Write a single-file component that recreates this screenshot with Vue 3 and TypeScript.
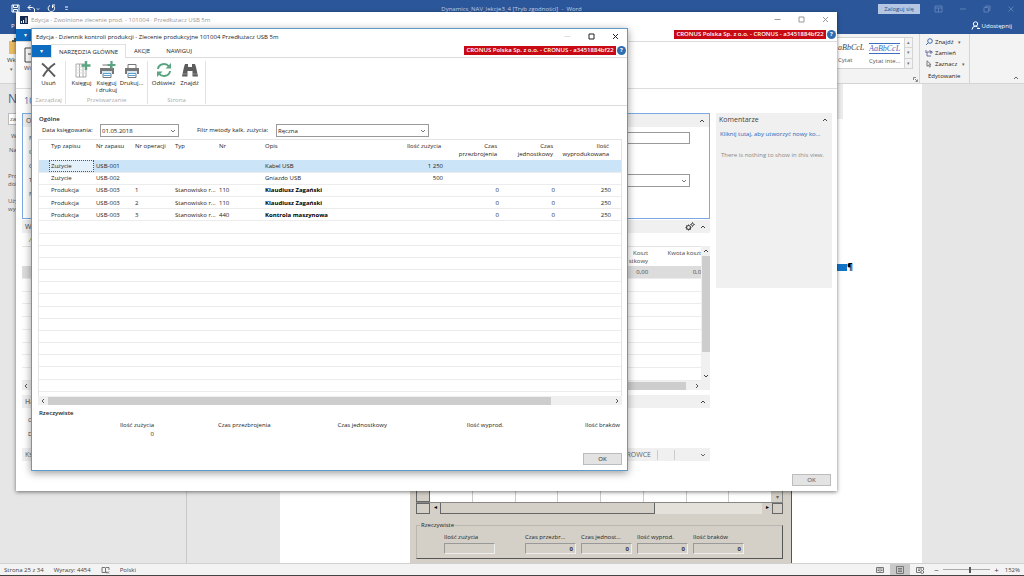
<script setup lang="ts">
import { ref } from 'vue'

interface Row {
  kind: string
  item: string
  op: string
  type: string
  no: string
  desc: string
  strong: boolean
  used: string
  setup: string
  run: string
  made: string
}

const rows: Row[] = [
  { kind: 'Zużycie', item: 'USB-001', op: '', type: '', no: '', desc: 'Kabel USB', strong: false, used: '1 250', setup: '', run: '', made: '' },
  { kind: 'Zużycie', item: 'USB-002', op: '', type: '', no: '', desc: 'Gniazdo USB', strong: false, used: '500', setup: '', run: '', made: '' },
  { kind: 'Produkcja', item: 'USB-003', op: '1', type: 'Stanowisko r...', no: '110', desc: 'Klaudiusz Zagański', strong: true, used: '', setup: '0', run: '0', made: '250' },
  { kind: 'Produkcja', item: 'USB-003', op: '2', type: 'Stanowisko r...', no: '110', desc: 'Klaudiusz Zagański', strong: true, used: '', setup: '0', run: '0', made: '250' },
  { kind: 'Produkcja', item: 'USB-003', op: '3', type: 'Stanowisko r...', no: '440', desc: 'Kontrola maszynowa', strong: true, used: '', setup: '0', run: '0', made: '250' },
]
const blankRows = 14
const selected = ref(0)
const postingDate = ref('01.05.2018')
const method = ref('Ręczna')
const zoom = ref(58)
const company = 'CRONUS Polska Sp. z o.o. - CRONUS - a3451884bf22'
const totals = [
  { label: 'Ilość zużycia', value: '0' },
  { label: 'Czas przezbrojenia', value: '' },
  { label: 'Czas jednostkowy', value: '' },
  { label: 'Ilość wyprod.', value: '' },
  { label: 'Ilość braków', value: '' },
]
const oldTotals = [
  { label: 'Ilość zużycia', value: '' },
  { label: 'Czas przezbr...', value: '0' },
  { label: 'Czas jednost...', value: '0' },
  { label: 'Ilość wyprod.', value: '0' },
  { label: 'Ilość braków', value: '0' },
]
const backLabels = ['N', 'O', 'O', 'T', 'N']
</script>

<template>
  <div class="desktop">
    <header class="word-top">
      <div class="word-title">
        <div class="quick">
          <button aria-label="Zapisz"><svg width="9" height="9" viewBox="0 0 9 9"><path d="M1 1h7v7H1zM2.500 1v2.500h4V1M2.500 8V5.500h4V8" /></svg></button>
          <button aria-label="Cofnij"><svg width="13" height="9" viewBox="0 0 13 9"><path d="M3.500 1 1 3.500 3.500 6M1 3.500h4.500q3 .5 2 4.500" /><path d="m10 4.500 1 1 1-1" /></svg></button>
          <button aria-label="Ponów"><svg width="9" height="9" viewBox="0 0 9 9"><path d="M3 1.500a3.200 3.200 0 1 0 3.500.5M8 1H5.500v3" /></svg></button>
          <button aria-label="Dostosuj"><svg width="7" height="9" viewBox="0 0 7 9"><path d="M2 3h3M2.500 5l1 1 1-1" /></svg></button>
        </div>
        <span class="doc-name">Dynamics_NAV_lekcje3_4 [Tryb zgodności]&nbsp; - &nbsp;Word</span>
        <button class="sign-in">Zaloguj się</button>
        <div class="word-ctl">
          <svg width="9" height="8" viewBox="0 0 9 8"><path d="M1 1h7v6H1zM1 3h7M4.500 3v4" /></svg>
          <svg width="8" height="8" viewBox="0 0 8 8"><path d="M1 4h6" /></svg>
          <svg width="8" height="8" viewBox="0 0 8 8"><path d="M1 2.500h4.500V7H1zM2.500 2.500V1H7v4.500H5.500" /></svg>
          <svg width="8" height="8" viewBox="0 0 8 8"><path d="m1.500 1.500 5 5m0-5-5 5" /></svg>
        </div>
      </div>
      <div class="word-tabs">
        <button>P</button>
        <button class="share"><svg width="9" height="9" viewBox="0 0 9 9"><circle cx="4.500" cy="3" r="2.200" /><path d="M1 8.500Q1.500 5 4.500 5.200q2 0 2.500 1.300M6 7.500h3" /></svg>Udostępnij</button>
      </div>
    </header>

    <section class="word-ribbon">
      <button class="paste">
        <svg width="16" height="17" viewBox="0 0 16 17"><path d="M2 3h12v13H2z" fill="#e9bb62" /><path d="M5 4V2h2V0h3v2h2v2z" fill="#555" /></svg>
        Wk<i>▾</i>
      </button>
      <div class="ribbon-right">
        <div class="gallery">
          <button class="style-a"><em>aBbCcL</em>Cytat</button>
          <button class="style-b"><em>AaBbCcL</em>Cytat inte...</button>
          <div class="gal-nav"><span>▴</span><span>▾</span><span>▾</span></div>
        </div>
        <div class="launcher"><svg width="5" height="5" viewBox="0 0 5 5"><path d="M.5 3V.5H3M2 2l2.500 2.500V2.500M4.500 4.500H2.500" /></svg></div>
        <div class="editing">
          <button><svg width="8" height="8" viewBox="0 0 8 8"><circle cx="5" cy="3" r="2.300" stroke="#3f6db0" /><path d="M3.300 4.700 1 7" stroke="#3f6db0" /></svg>Znajdź<i>▾</i></button>
          <button><svg width="8" height="8" viewBox="0 0 8 8"><path d="M1 1v3h2V2M5 1v3h2V2.500H5M2 5v2h4" stroke="#6a6fa0" /></svg>Zamień</button>
          <button><svg width="8" height="8" viewBox="0 0 8 8"><path d="M2 .8v5.500l1.500-1.200 1 2 1-.5-1-2H6z" stroke="#777" /></svg>Zaznacz<i>▾</i></button>
          <span>Edytowanie</span>
        </div>
        <div class="collapse"><svg width="6" height="4" viewBox="0 0 6 4"><path d="m1 3 2-2 2 2" /></svg></div>
      </div>
    </section>

    <main class="workspace">
      <aside class="nav-pane">
        <h2>N</h2>
        <input type="text" value="za" aria-label="Wyszukaj w dokumencie">
        <p class="n1">W</p>
        <p class="n2">Na</p>
        <p class="n3">Pro<br>dok</p>
        <p class="n4">Uży<br>wy</p>
      </aside>
      <div class="page">
        <div class="doc-pic"></div>
        <div class="doc-mark"><b></b>¶</div>
        <div class="old-app">
          <div class="old-grid"><b></b><i v-for="n in 8" :key="n"></i><span>▾</span></div>
          <div class="old-scroll"><b></b><span>◂</span><i></i><u></u><span>▸</span><b></b></div>
          <fieldset>
            <legend>Rzeczywiste</legend>
            <label v-for="t in oldTotals" :key="t.label">{{ t.label }}<output>{{ t.value }}</output></label>
          </fieldset>
        </div>
      </div>
    </main>

    <footer class="status">
      <span>Strona 25 z 34</span><span>Wyrazy: 4454</span>
      <svg width="9" height="8" viewBox="0 0 9 8"><path d="M4 1.500H1v5h3l.5.5.5-.5h1M4.500 2v5M4.500 1.500H8V4M6 5.500l2 2m0-2-2 2" /></svg>
      <span>Polski</span>
      <div class="views">
        <button aria-label="Tryb odczytu"><svg width="8" height="8" viewBox="0 0 8 8"><path d="M.5 1.500h7v5h-7zM4 1v6M1.500 3h1.500M1.500 4.500h1.500M5 3h1.500M5 4.500h1.500" /></svg></button>
        <button class="on" aria-label="Układ wydruku"><svg width="8" height="8" viewBox="0 0 8 8"><path d="M.5.5h7v7h-7zM2 2.500h4M2 4h4M2 5.500h4" /></svg></button>
        <button aria-label="Układ sieci Web"><svg width="8" height="8" viewBox="0 0 8 8"><path d="M5 6.500H.5v-5h7V4M2 3h4M2 4.500h2" /><circle cx="6.200" cy="6" r="1.500" /></svg></button>
      </div>
      <button class="zb">−</button>
      <input v-model="zoom" type="range" min="0" max="100" aria-label="Powiększenie">
      <button class="zb">+</button>
      <span class="pct">152%</span>
    </footer>

    <section class="win back">
      <div class="titlebar">
        <svg class="logo" width="8" height="8" viewBox="0 0 8 8"><path d="M0 0h8v8H0z" fill="#12284c" /><path d="M1.500 7V5M3.500 7V4M6 7V1.500" stroke="#fff" /></svg>
        <span>Edycja - Zwolnione zlecenie prod. - 101004 · Przedłużacz USB 5m</span>
        <div class="ctl">
          <button aria-label="Minimalizuj"><svg width="7" height="7" viewBox="0 0 7 7"><path d="M.5 3.500h6" /></svg></button>
          <button aria-label="Maksymalizuj"><svg width="7" height="7" viewBox="0 0 7 7"><path d="M1 1h5v5H1z" /></svg></button>
          <button aria-label="Zamknij"><svg width="7" height="7" viewBox="0 0 7 7"><path d="m1 1 5 5m0-5-5 5" /></svg></button>
        </div>
      </div>
      <div class="tabs">
        <button class="file" aria-label="Menu">▾</button>
        <span class="company">{{ company }}</span>
        <button class="help">?</button>
      </div>
      <div class="back-ribbon"><button><svg width="13" height="16" viewBox="0 0 13 16"><path d="M1 1h11v14H1zM4 7h5" /></svg>Wi</button></div>
      <div class="back-body">
        <h1>10</h1>
        <div class="cols">
          <div class="main-col">
            <section class="fast active">
              <header>O<svg width="6" height="4" viewBox="0 0 6 4"><path d="m1 3 2-2 2 2" /></svg></header>
              <div class="fields">
                <div class="labels"><span v-for="(l, i) in backLabels" :key="i">{{ l }}</span></div>
                <div class="inputs">
                  <input type="text" aria-label="Nr">
                  <div class="combo"><select aria-label="Typ"><option></option></select><svg width="6" height="4" viewBox="0 0 6 4"><path d="m1 1 2 2 2-2" /></svg></div>
                </div>
              </div>
            </section>
            <section class="fast lines">
              <header>W
                <svg class="gears" width="10" height="9" viewBox="0 0 10 9"><circle cx="3.500" cy="5.500" r="2" stroke-width="1.200" /><circle cx="7.500" cy="2.500" r="1.200" /><path d="M3.500 2.500v1M3.500 7.500v1M.5 5.500h1M5.500 5.500h1M1.500 3.500l.7.7M5.500 7.500l-.7-.7M1.500 7.500l.7-.7M7.500.3v.8M7.500 3.900v.8M5.300 2.500h.8M8.900 2.500h.8" /></svg>
                <svg width="6" height="4" viewBox="0 0 6 4"><path d="m1 3 2-2 2 2" /></svg></header>
              <div class="line-tools"><svg width="8" height="7" viewBox="0 0 8 7"><path d="M1 6 4 1l1 2" stroke="#a8c26a" /></svg></div>
              <div class="line-grid">
                <table>
                  <thead><tr><th></th><th>Koszt<br>stkowy</th><th>Kwota koszt</th></tr></thead>
                  <tbody>
                    <tr class="grey"><td></td><td>0,00</td><td>0,0</td></tr>
                    <tr v-for="n in 8" :key="n"><td></td><td></td><td></td></tr>
                  </tbody>
                </table>
                <div class="vscroll"><svg width="6" height="4" viewBox="0 0 6 4"><path d="m1 3 2-2 2 2" /></svg><i></i><svg width="6" height="4" viewBox="0 0 6 4"><path d="m1 1 2 2 2-2" /></svg></div>
              </div>
              <div class="hscroll"><svg width="4" height="6" viewBox="0 0 4 6"><path d="M3 1 1 3l2 2" /></svg><i></i><svg width="4" height="6" viewBox="0 0 4 6"><path d="m1 1 2 2-2 2" /></svg></div>
            </section>
            <section class="fast sched">
              <header>Ha<svg width="6" height="4" viewBox="0 0 6 4"><path d="m1 3 2-2 2 2" /></svg></header>
              <div class="labels"><span>C</span><span>D</span></div>
            </section>
            <section class="fast post">
              <header>Ks<em>ROWCE</em><b></b><b></b><svg width="6" height="4" viewBox="0 0 6 4"><path d="m1 1 2 2 2-2" /></svg></header>
            </section>
          </div>
          <aside class="notes">
            <header>Komentarze<svg width="6" height="4" viewBox="0 0 6 4"><path d="m1 3 2-2 2 2" /></svg></header>
            <a href="#">Kliknij tutaj, aby utworzyć nowy ko...</a>
            <p>There is nothing to show in this view.</p>
          </aside>
        </div>
      </div>
      <div class="foot"><button class="ok">OK</button></div>
    </section>

    <section class="win front">
      <div class="titlebar">
        <span>Edycja - Dziennik kontroli produkcji - Zlecenie produkcyjne 101004 Przedłużacz USB 5m</span>
        <div class="ctl">
          <button class="dim" aria-label="Minimalizuj"><svg width="7" height="7" viewBox="0 0 7 7"><path d="M.5 3.500h6" /></svg></button>
          <button aria-label="Maksymalizuj"><svg width="7" height="7" viewBox="0 0 7 7"><path d="M1 1h5v5H1z" /></svg></button>
          <button aria-label="Zamknij"><svg width="7" height="7" viewBox="0 0 7 7"><path d="m1 1 5 5m0-5-5 5" /></svg></button>
        </div>
      </div>
      <nav class="tabs">
        <button class="file" aria-label="Menu">▾</button>
        <button class="tab current">NARZĘDZIA GŁÓWNE</button>
        <button class="tab">AKCJE</button>
        <button class="tab">NAWIGUJ</button>
        <span class="company">{{ company }}</span>
        <button class="help">?</button>
      </nav>
      <div class="ribbon">
        <div class="group g1">
          <div class="btns"><button><svg width="18" height="18" viewBox="0 0 18 18"><path d="M2 2.500c4 3 9 9 13 13M15 2.500C10 6 6 10 3 15.500" stroke="#5c5c5c" stroke-width="2" /></svg>Usuń</button></div>
          <span>Zarządzaj</span>
        </div>
        <div class="group g2">
          <div class="btns">
            <button><svg width="18" height="18" viewBox="0 0 18 18"><path d="M3 3h10v13H3zM6.500 3v13M10 3v13" stroke="#aaa" /><path d="M3 6h10M3 9h10M3 12h10" stroke="#ddd" /><path d="M13 0v9M8.500 4.500h9" stroke="#5ba583" stroke-width="2.400" /></svg>Księguj</button>
            <button><svg width="18" height="18" viewBox="0 0 18 18"><path d="M4.500 4h8v3M5 12v4.500h8V12" stroke="#777" /><path d="M2 7h14v6H2z" fill="#777" /><path d="M4 10h10v3H4z" fill="#d8e6f0" /><path d="M5 12.500h8M5.500 14.500h7" stroke="#58a0cf" /><path d="M13.500 0v8M9.500 4h8" stroke="#5ba583" stroke-width="2.200" /></svg>Księguj<br>i drukuj</button>
            <button><svg width="18" height="18" viewBox="0 0 18 18"><path d="M5 7V3.500h8V7M5 12v4.500h8V12" stroke="#777" /><path d="M2 7h14v6H2z" fill="#777" /><path d="M4 10h10v3H4z" fill="#d8e6f0" /><path d="M5 12.500h8M5.500 14.500h7" stroke="#58a0cf" /></svg>Drukuj...</button>
          </div>
          <span>Przetwarzanie</span>
        </div>
        <div class="group g3">
          <div class="btns">
            <button><svg width="18" height="18" viewBox="0 0 18 18"><path d="M3 8a6 5.500 0 0 1 11-2.500M15 10a6 5.500 0 0 1-11 2.500" stroke="#5ba583" stroke-width="2" /><path d="M16 2v5.500h-5.500zM2 16v-5.500h5.500z" fill="#5ba583" /></svg>Odśwież</button>
            <button><svg width="18" height="18" viewBox="0 0 18 18"><path d="M4 3h3v3h4V3h3l1 3 2 9.500h-5.500V10h-5v5.500H1L3 6z" fill="#5c5c5c" /><path d="M2 13h4.500M11.500 13H16" stroke="#aaa" stroke-width=".7" /></svg>Znajdź</button>
          </div>
          <span>Strona</span>
        </div>
      </div>

      <div class="content">
        <h3>Ogólne</h3>
        <div class="filters">
          <label for="date">Data księgowania:</label>
          <div class="combo date"><input id="date" v-model="postingDate" type="text"><svg width="6" height="4" viewBox="0 0 6 4"><path d="m1 1 2 2 2-2" /></svg></div>
          <label for="method">Filtr metody kalk. zużycia:</label>
          <div class="combo method"><select id="method" v-model="method"><option>Ręczna</option></select><svg width="6" height="4" viewBox="0 0 6 4"><path d="m1 1 2 2 2-2" /></svg></div>
        </div>
        <div class="sheet">
          <table>
            <colgroup><col class="c0"><col class="c1"><col class="c2"><col class="c3"><col class="c4"><col class="c5"><col><col class="c7"><col class="c8"><col class="c9"><col class="c10"><col class="c11"></colgroup>
            <thead>
              <tr><th></th><th>Typ zapisu</th><th>Nr zapasu</th><th>Nr operacji</th><th>Typ</th><th>Nr</th><th>Opis</th><th class="r">Ilość zużycia</th><th class="r">Czas<br>przezbrojenia</th><th class="r">Czas<br>jednostkowy</th><th class="r">Ilość<br>wyprodukowana</th><th></th></tr>
            </thead>
            <tbody>
              <tr v-for="(r, i) in rows" :key="i" :class="{ sel: selected === i }" @click="selected = i">
                <td></td><td class="kind">{{ r.kind }}</td><td>{{ r.item }}</td><td>{{ r.op }}</td><td>{{ r.type }}</td><td>{{ r.no }}</td>
                <td :class="{ strong: r.strong }">{{ r.desc }}</td><td class="r">{{ r.used }}</td><td class="r">{{ r.setup }}</td><td class="r">{{ r.run }}</td><td class="r">{{ r.made }}</td><td></td>
              </tr>
              <tr v-for="n in blankRows" :key="'b' + n"><td colspan="12"></td></tr>
            </tbody>
          </table>
        </div>
        <div class="hscroll"><svg width="4" height="6" viewBox="0 0 4 6"><path d="M3 1 1 3l2 2" /></svg><i></i><svg width="4" height="6" viewBox="0 0 4 6"><path d="m1 1 2 2-2 2" /></svg></div>
        <h3>Rzeczywiste</h3>
        <div class="totals">
          <div v-for="t in totals" :key="t.label"><span>{{ t.label }}</span><span>{{ t.value }}</span></div>
        </div>
      </div>
      <div class="foot"><button class="ok">OK</button></div>
    </section>
  </div>
</template>

<style>
html, body { height: 100%; }
body { margin: 0; overflow: hidden; }
</style>

<style scoped>
.desktop { position: relative; display: flex; flex-direction: column; height: 100vh; overflow: hidden; font: 6px/8px "Open Sans", "Noto Sans", sans-serif; color: #333; background: #e6e6e6; }
.desktop *, .desktop *::before { box-sizing: border-box; }
button, input, select { font: inherit; color: inherit; margin: 0; padding: 0; border: 0; background: none; border-radius: 0; }
button { white-space: nowrap; }
svg { fill: none; stroke: currentColor; flex: none; display: block; }
svg path[fill] { stroke: none; }
h1, h2, h3, p { margin: 0; font-weight: normal; }

.word-top { background: #2b579a; color: #fff; height: 34px; }
.word-title { display: flex; align-items: center; height: 17px; padding: 0 9px 0 11px; }
.quick { display: flex; gap: 7px; width: 198px; align-items: center; }
.doc-name { flex: 1; text-align: center; color: #c3d0e5; padding-right: 64px; }
.sign-in { width: 42px; height: 10px; background: #b5c6e2; color: #2b4a80; margin-right: 14px; }
.word-ctl { display: flex; gap: 16px; color: #5c7fb8; }
.word-tabs { display: flex; justify-content: space-between; align-items: center; height: 17px; padding: 0 12px 0 11px; }
.share { display: flex; align-items: center; gap: 2px; }

.word-ribbon { display: flex; justify-content: space-between; height: 50px; background: #f3f3f3; border-bottom: 1px solid #d4d4d4; }
.paste { display: flex; flex-direction: column; align-items: flex-start; padding: 4px 0 0 7px; gap: 1px; }
.paste i, .editing i { font-style: normal; font-size: 5px; padding-left: 3px; color: #666; }
.ribbon-right { display: flex; }
.gallery { display: flex; align-self: flex-start; margin-top: 3px; height: 32px; background: #fff; border: 1px solid #d4d4d4; }
.gallery button { display: flex; flex-direction: column; align-items: flex-start; gap: 3px; padding: 5px 4px 0 0; width: 35px; color: #555; }
.gallery em { font: italic 8px/10px "Liberation Serif", serif; color: #444; }
.gallery .style-a { padding-left: 3px; width: 34px; }
.gallery .style-b em { color: #3e6cc0; border-top: 1px solid #3e6cc0; border-bottom: 1px solid #3e6cc0; line-height: 9px; }
.gal-nav { width: 8px; display: grid; border-left: 1px solid #d4d4d4; text-align: center; font-size: 5px; background: #f3f3f3; color: #777; }
.gal-nav span + span { border-top: 1px solid #d4d4d4; }
.launcher { width: 6px; padding: 43px 0 0; color: #888; }
.editing { display: flex; flex-direction: column; width: 51px; border: 1px solid #d4d4d4; border-width: 0 1px; padding: 2px 0 0 5px; color: #222; }
.editing button { display: flex; align-items: center; gap: 2px; height: 12px; }
.editing span { height: 14px; line-height: 14px; padding-left: 3px; }
.collapse { width: 54px; display: flex; justify-content: flex-end; align-items: flex-end; padding: 0 5px 3px 0; color: #666; }

.workspace { flex: 1; display: flex; min-height: 0; }
.nav-pane { width: 187px; border-right: 1px solid #c8c8c8; padding: 7px 0 0 8px; color: #555; }
.nav-pane h2 { font-size: 12px; line-height: 16px; color: #456496; }
.nav-pane input { width: 168px; height: 12px; margin-top: 6px; border: 1px solid #bbb; background: #fff; padding-left: 1px; display: block; }
.n1 { padding: 7px 0 0 3px; }
.n2 { padding: 6px 0 0 1px; }
.n3 { padding-top: 18px; }
.n4 { padding-top: 9px; }
.page { flex: 1; margin: 0 102px 0 93px; background: #fff; display: flex; flex-direction: column; align-items: center; }
.doc-pic { align-self: flex-end; width: 60px; height: 35px; margin-right: 79px; background: #ececec; }
.doc-mark { align-self: flex-end; display: flex; align-items: center; margin: 142px 69px 0 0; font-size: 9px; line-height: 12px; font-weight: bold; color: #000; }
.doc-mark b { width: 24px; height: 7px; background: #1274c8; }
.old-app { margin-top: auto; width: 382px; background: #d4d0c8; padding: 0 8px 4px 6px; border-right: 1px solid #555; color: #222; }
.old-grid, .old-scroll { display: flex; height: 11px; background: #fff; }
.old-grid { height: 20px; border-bottom: 1px solid #888; }
.old-grid b, .old-scroll b { width: 14px; background: #d4d0c8; border: 1px solid #666; }
.old-scroll b:last-child { width: 11px; }
.old-grid i { flex: 1; border-right: 1px solid #ccc; }
.old-grid span { width: 11px; background: #d4d0c8; text-align: center; padding-top: 10px; border: 1px solid #888; border-width: 0 1px 0 0; color: #666; }
.old-scroll { background: #e4e1da; }
.old-scroll span { width: 10px; text-align: center; color: #000; background: #d4d0c8; }
.old-scroll i { flex: 2; background: #d4d0c8; border: 1px solid #666; border-width: 0 1px 1px; }
.old-scroll u { flex: 1; }
fieldset { display: grid; grid-template-columns: 81px repeat(4, 56px); margin: 7px 0 0; padding: 4px 0 3px 27px; border: 1px solid #bbb7b0; border-right-color: #555; border-bottom-color: #555; height: 38px; min-width: 0; }
legend { padding: 0 1px; margin-left: -24px; line-height: 8px; }
fieldset label { display: block; white-space: nowrap; }
fieldset output { display: block; width: 51px; height: 11px; line-height: 10px; border: 1px solid #999; border-right-color: #eee; border-bottom-color: #eee; text-align: right; padding-right: 2px; font-weight: bold; color: #333; margin-top: 2px; }

.status { display: flex; align-items: center; height: 13px; background: #f3f3f3; border-top: 1px solid #d0d0d0; border-bottom: 1px solid #444; padding: 0 4px; gap: 10px; color: #444; }
.status svg { color: #777; }
.views { display: flex; margin-left: auto; }
.views button { width: 20px; height: 11px; display: grid; place-items: center; }
.views .on { background: #c8c8c8; }
.status .zb { width: 5px; margin: 0 -6px; font-size: 8px; }
.status input { width: 47px; height: 8px; appearance: none; background: linear-gradient(#aaa, #aaa) center / 100% 1px no-repeat; }
.status input::-webkit-slider-thumb { appearance: none; width: 2px; height: 6px; background: #555; }
.pct { width: 17px; text-align: right; }

.win { position: absolute; display: flex; flex-direction: column; background: #fff; }
.back { inset: 12px 187px 85px 16px; box-shadow: 0 1px 4px #0008; color: #444; }
.front { inset: 28px 396px 105px 31px; border: 1px solid #5e9bc9; box-shadow: 0 2px 8px #0006; color: #222; }
.titlebar { display: flex; align-items: center; height: 15px; padding: 0 8px 0 4px; }
.back .titlebar { color: #999; gap: 3px; }
.ctl { display: flex; margin-left: auto; gap: 17px; }
.ctl .dim { color: #ddd; }
.tabs { display: flex; align-items: center; height: 14px; border-bottom: 1px solid #dcdcdc; padding-right: 1px; }
.back .tabs { height: 15px; }
.file { width: 19px; height: 12px; align-self: flex-end; background: #0e6cc0; color: #fff; }
.tab { align-self: stretch; padding: 1px 8px 0; }
.tab.current { background: #fff; border: 1px solid #e0e0e0; border-width: 1px 1px 0; margin-bottom: -1px; width: 75px; padding: 0; }
.company { margin-left: auto; height: 9px; line-height: 9px; width: 152px; text-align: center; background: #c80a14; color: #fff; white-space: nowrap; font-weight: 600; }
.help { width: 9px; height: 9px; border-radius: 50%; background: #2f6db0; color: #fff; font-weight: bold; margin-left: 1px; line-height: 9px; }

.ribbon { display: flex; height: 48px; border-bottom: 1px solid #dcdcdc; }
.group { display: flex; flex-direction: column; justify-content: space-between; align-items: center; border-right: 1px solid #e2e2e2; margin: 3px 0 1px; color: #aaa; }
.btns { display: flex; color: #222; }
.btns button { display: flex; flex-direction: column; align-items: center; gap: 1px; width: 25px; line-height: 7px; }
.g1 { width: 34px; }
.g2 { width: 82px; }
.g3 { width: 58px; }
.g3 .btns button { width: 26px; }

.content { flex: 1; display: flex; flex-direction: column; padding: 9px 5px 0 6px; min-height: 0; }
h3 { font-size: 6px; font-weight: 600; padding-left: 1px; line-height: 8px; }
.filters { display: flex; align-items: center; padding-left: 4px; height: 13px; margin-top: 1px; }
.filters label { width: 58px; white-space: nowrap; padding-bottom: 1px; }
.filters .date { width: 79px; margin-right: 18px; }
.filters .date + label { width: 79px; }
.combo { display: grid; align-items: center; height: 13px; border: 1px solid #999; }
.combo > * { grid-area: 1 / 1; }
.combo input, .combo select { appearance: none; width: 100%; height: 11px; padding-left: 1px; }
.combo svg { justify-self: end; margin-right: 2px; color: #777; pointer-events: none; }
.filters .method { width: 153px; }
.sheet { flex: 1; margin-top: 2px; border: 1px solid #e4e4e4; border-bottom: 0; padding-bottom: 4px; min-height: 0; }
.sheet table { height: 100%; }
table { border-collapse: collapse; width: 100%; table-layout: fixed; }
th, td { padding: 0 2px; text-align: left; font-weight: normal; white-space: nowrap; overflow: hidden; }
th { height: 20px; vertical-align: top; padding: 2px 4px 0 2px; line-height: 8px; }
.sheet tbody td { height: 12px; }
tbody td { border-bottom: 1px solid #ececec; line-height: 8px; }
.r { text-align: right; }
.strong { font-weight: 700; color: #000; }
.sel td { background: #cce4f7; }
.sel .kind { outline: 1px dotted #555; outline-offset: -1px; background: #e4f1fb; }
.c0 { width: 10px; } .c1 { width: 45px; } .c2 { width: 39px; } .c3 { width: 40px; } .c4 { width: 44px; } .c5 { width: 46px; }
.c7 { width: 45px; } .c8, .c9, .c10 { width: 56px; } .c11 { width: 8px; }
.hscroll { display: flex; align-items: center; height: 9px; background: #f0f0f0; padding: 0 3px; gap: 3px; color: #555; }
.hscroll i { width: 503px; height: 8px; background: #cdcdcd; }
.hscroll svg:last-child { margin-left: auto; }
.content .hscroll { flex: none; margin-bottom: 4px; }
.totals { display: grid; grid-template-columns: 116px repeat(4, 1fr); padding: 4px 2px 0 0; height: 36px; }
.totals div { display: flex; flex-direction: column; text-align: right; gap: 1px; }
.foot { display: flex; justify-content: flex-end; padding: 0 5px 5px; }
.ok { width: 39px; height: 12px; background: #e3e3e3; border: 1px solid #bcbcbc; }
.back .foot { padding-right: 6px; }

.back-ribbon { height: 47px; border-bottom: 1px solid #dcdcdc; padding: 5px 0 0 8px; flex: none; }
.back-ribbon button { display: grid; gap: 1px; justify-items: start; }
.back-body { flex: 1; padding: 4px 5px 0 6px; min-height: 0; }
h1 { font-size: 9px; line-height: 16px; color: #3a77b8; padding-left: 2px; margin-bottom: 4px; }
.cols { display: flex; gap: 6px; }
.main-col { flex: 1; min-width: 0; }
.fast header, .notes header { display: flex; align-items: center; height: 13px; background: #f0f0f0; padding: 0 4px 0 3px; font-size: 7px; }
.fast header svg, .notes header svg { margin-left: auto; }
.fast .gears + svg { margin-left: 5px; }
.active { border: 1px solid #7ba9e3; height: 106px; }
.fields { display: flex; justify-content: space-between; padding-right: 19px; }
.labels { display: grid; gap: 6px; padding: 7px 0 0 6px; }
.inputs { display: grid; gap: 30px; padding-top: 5px; width: 300px; align-content: start; }
.inputs > input { border: 1px solid #999; height: 12px; }
.lines { height: 176px; padding-top: 1px; }
.line-tools { height: 13px; padding: 3px 6px; }
.line-grid { display: flex; height: 135px; }
.line-grid table { border-top: 1px solid #e4e4e4; }
.line-grid th, .line-grid td { text-align: right; padding-right: 2px; }
.line-grid th { height: 19px; }
.line-grid th:nth-child(2) { width: 42px; }
.line-grid th:nth-child(3) { width: 51px; padding: 2px 0 0; }
.line-grid td:nth-child(3) { padding: 0; }
.line-grid td { height: 12px; }
.line-grid .grey td { background: #dcdcdc; }
.vscroll { width: 9px; background: #f0f0f0; display: flex; flex-direction: column; align-items: center; justify-content: space-between; padding: 3px 0; }
.vscroll i { width: 8px; height: 96px; margin-bottom: 20px; background: #cdcdcd; }
.lines .hscroll { padding: 0 11px 0 2px; }
.lines .hscroll i { width: auto; flex: 1; margin-right: 6px; }
.sched { height: 53px; }
.sched .labels { padding-top: 8px; }
.post header { color: #666; }
.post header em { margin-left: auto; font-style: normal; font-size: 7px; }
.post header b { width: 17px; height: 10px; border-left: 1px solid #ccc; margin-left: 6px; }
.post header b + b { margin-left: 0; }
.post header svg { margin-left: 9px; }
.notes { width: 116px; height: 175px; background: #f0f0f0; }
.notes a { display: block; margin: 4px 4px 13px; color: #1f66b8; text-decoration: none; white-space: nowrap; }
.notes p { margin: 0 5px; color: #888; white-space: nowrap; }
</style>
